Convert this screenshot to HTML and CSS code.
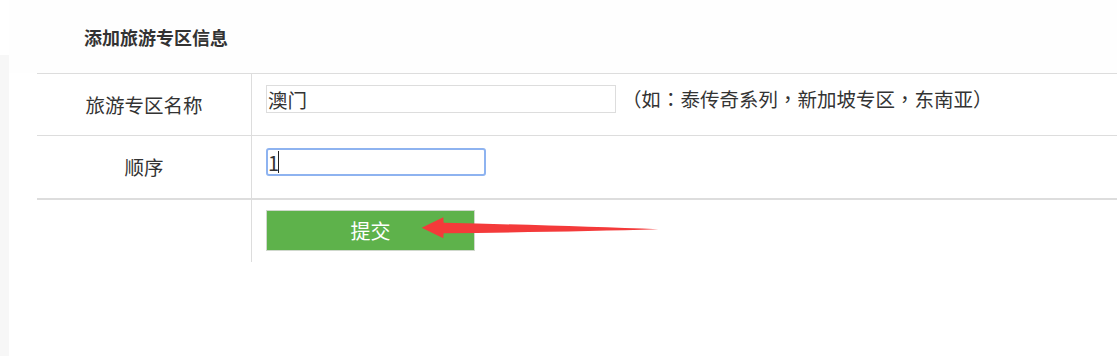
FILE: index.html
```html
<!DOCTYPE html>
<html lang="zh-CN">
<head>
<meta charset="utf-8">
<title>添加旅游专区信息</title>
<link rel="stylesheet" href="styles.css">
</head>
<body>
<div class="layout">
  <div class="edge"></div>
  <div class="main">
    <div class="header">
      <h2 class="title">添加旅游专区信息</h2>
    </div>
    <div class="form">
      <div class="row row-first">
        <div class="label">旅游专区名称</div>
        <div class="field">
          <input class="text-input wide" type="text" value="澳门">
          <span class="hint" lang="zh-TW">（如：泰传奇系列，新加坡专区，东南亚）</span>
        </div>
      </div>
      <div class="row row-second">
        <div class="label">顺序</div>
        <div class="field">
          <div class="input-wrap">
            <input class="text-input narrow focused" type="text" value="1">
            <span class="caret"></span>
          </div>
        </div>
      </div>
      <div class="row row-last">
        <div class="label"></div>
        <div class="field field-btn">
          <div class="btn-wrap">
            <button class="submit" type="button">提交</button>
            <svg class="arrow" width="260" height="40" viewBox="0 0 260 40">
              <path d="M11.7 22.7 L33.3 12.3 L33.6 17.7 C110 19.5 190 22 248.3 24.3 C190 26 110 27.5 33.6 28.3 L33.3 33.3 Z" fill="#f43a3a"/>
            </svg>
          </div>
        </div>
      </div>
    </div>
  </div>
</div>
</body>
</html>
```
FILE: styles.css
```css
* { box-sizing: border-box; }
html, body {
  margin: 0;
  padding: 0;
  background: #ffffff;
}
body {
  font-family: "Noto Sans CJK SC", "Liberation Sans", sans-serif;
  color: #333333;
  width: 1117px;
  height: 356px;
  overflow: hidden;
}
.layout {
  display: flex;
  height: 356px;
}
.edge {
  width: 9px;
  flex: 0 0 9px;
  margin-top: 55px;
  background: #f7f7f7;
}
.main {
  flex: 1;
  min-width: 0;
}
.header {
  height: 73px;
  display: flex;
  align-items: center;
  padding-left: 75px;
  background: #fefefe;
}
.title {
  margin: 0;
  font-size: 18px;
  font-weight: bold;
  line-height: 24px;
  color: #333;
}
.form {
  margin-left: 28px;
  border-top: 1px solid #dddddd;
}
.row {
  display: grid;
  grid-template-columns: 215px 1fr;
}
.row-first {
  height: 62px;
  border-bottom: 1px solid #dddddd;
}
.row-second {
  height: 64px;
  border-bottom: 2px solid #dddddd;
}
.row-last {
  height: 62px;
}
.label {
  border-right: 1px solid #dddddd;
  display: flex;
  align-items: center;
  justify-content: center;
  font-size: 19.5px;
  line-height: 24px;
  color: #333;
}
.field {
  padding: 11px 14px 0;
  display: flex;
  align-items: flex-start;
}
.row-second .field { padding-top: 12px; }
.field-btn { padding-top: 10px; }
.text-input {
  height: 28px;
  margin: 0;
  padding: 0 1px;
  border: 1px solid #dddddd;
  border-radius: 0;
  outline: none;
  background: #fff;
  font-family: "Noto Sans CJK SC", "Liberation Sans", sans-serif;
  font-size: 19.5px;
  line-height: 26px;
  color: #333;
}
.wide { width: 350px; }
.narrow { width: 220px; }
.focused {
  border: 2px solid #8eb3f0;
  border-radius: 3px;
  padding: 0;
  font-size: 20px;
}
.hint {
  margin-left: 6px;
  font-family: "Noto Sans CJK TC", "Noto Sans CJK SC", sans-serif;
  font-size: 19.5px;
  line-height: 28px;
  color: #333;
}
.input-wrap {
  position: relative;
}
.caret {
  position: absolute;
  left: 12px;
  top: 3px;
  width: 1px;
  height: 22px;
  background: #222;
}
.btn-wrap {
  position: relative;
}
.submit {
  display: block;
  width: 209px;
  height: 41px;
  margin: 0;
  padding: 0;
  border: 1px solid #cfd8cc;
  background: #5eb24b;
  color: #ffffff;
  font-family: "Noto Sans CJK SC", "Liberation Sans", sans-serif;
  font-size: 20px;
  line-height: 39px;
  text-align: center;
}
.arrow {
  position: absolute;
  left: 144px;
  top: -5px;
}
```
